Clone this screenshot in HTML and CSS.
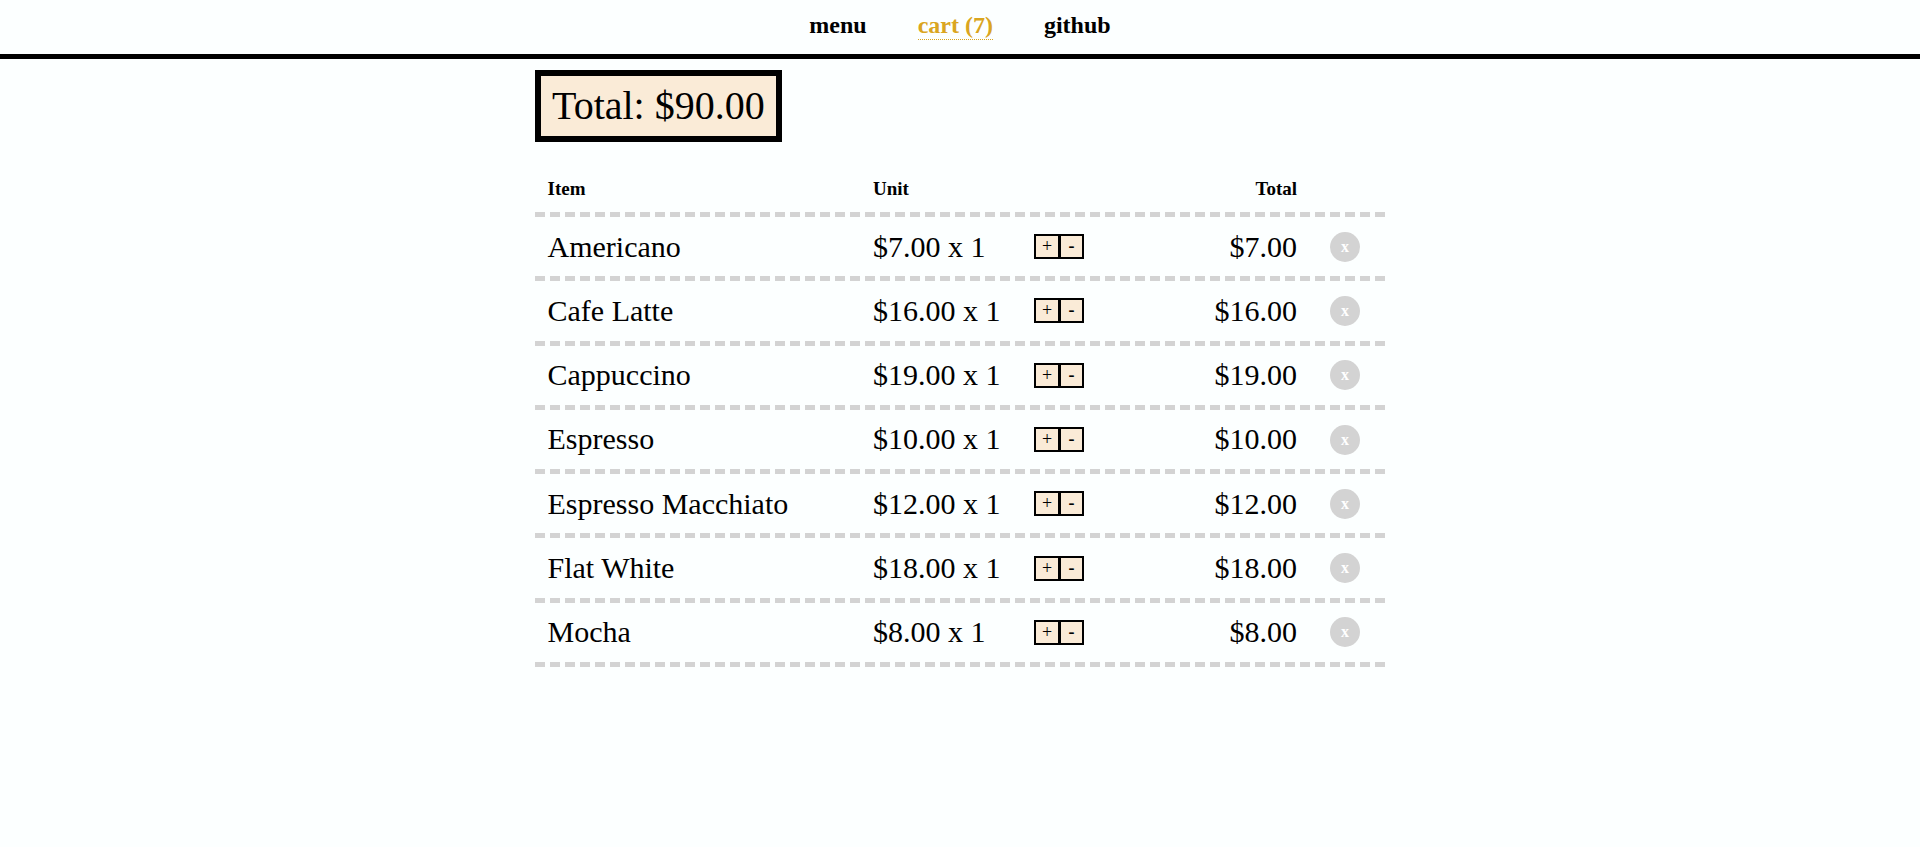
FILE: index.html
```html
<!DOCTYPE html>
<html>
<head>
<meta charset="utf-8">
<title>Cart</title>
<link rel="stylesheet" href="styles.css">
</head>
<body>
<nav class="nav">
  <a class="nav-link" href="#">menu</a>
  <a class="nav-link active" href="#">cart (7)</a>
  <a class="nav-link" href="#">github</a>
</nav>
<main class="page">
  <div class="total-box">Total: $90.00</div>
  <div class="cart">
    <div class="row head">
      <div class="cell">Item</div>
      <div class="cell">Unit</div>
      <div class="cell"></div>
      <div class="cell right">Total</div>
      <div class="cell"></div>
    </div>
    <div class="row">
      <div class="cell">Americano</div>
      <div class="cell">$7.00 x 1</div>
      <div class="cell"><span class="qty"><button class="qbtn">+</button><button class="qbtn minus">-</button></span></div>
      <div class="cell right">$7.00</div>
      <div class="cell"><button class="remove">x</button></div>
    </div>
    <div class="row">
      <div class="cell">Cafe Latte</div>
      <div class="cell">$16.00 x 1</div>
      <div class="cell"><span class="qty"><button class="qbtn">+</button><button class="qbtn minus">-</button></span></div>
      <div class="cell right">$16.00</div>
      <div class="cell"><button class="remove">x</button></div>
    </div>
    <div class="row">
      <div class="cell">Cappuccino</div>
      <div class="cell">$19.00 x 1</div>
      <div class="cell"><span class="qty"><button class="qbtn">+</button><button class="qbtn minus">-</button></span></div>
      <div class="cell right">$19.00</div>
      <div class="cell"><button class="remove">x</button></div>
    </div>
    <div class="row">
      <div class="cell">Espresso</div>
      <div class="cell">$10.00 x 1</div>
      <div class="cell"><span class="qty"><button class="qbtn">+</button><button class="qbtn minus">-</button></span></div>
      <div class="cell right">$10.00</div>
      <div class="cell"><button class="remove">x</button></div>
    </div>
    <div class="row">
      <div class="cell">Espresso Macchiato</div>
      <div class="cell">$12.00 x 1</div>
      <div class="cell"><span class="qty"><button class="qbtn">+</button><button class="qbtn minus">-</button></span></div>
      <div class="cell right">$12.00</div>
      <div class="cell"><button class="remove">x</button></div>
    </div>
    <div class="row">
      <div class="cell">Flat White</div>
      <div class="cell">$18.00 x 1</div>
      <div class="cell"><span class="qty"><button class="qbtn">+</button><button class="qbtn minus">-</button></span></div>
      <div class="cell right">$18.00</div>
      <div class="cell"><button class="remove">x</button></div>
    </div>
    <div class="row">
      <div class="cell">Mocha</div>
      <div class="cell">$8.00 x 1</div>
      <div class="cell"><span class="qty"><button class="qbtn">+</button><button class="qbtn minus">-</button></span></div>
      <div class="cell right">$8.00</div>
      <div class="cell"><button class="remove">x</button></div>
    </div>
  </div>
</main>
</body>
</html>
```
FILE: styles.css
```css
html, body {
  margin: 0;
  padding: 0;
}
body {
  background: #fcffff;
  font-family: "Liberation Serif", "Times New Roman", serif;
  color: #000;
  min-height: 847px;
}
.nav {
  display: flex;
  justify-content: center;
  gap: 51px;
  padding: 12px 0 13.5px;
  border-bottom: 5px solid #000;
}
.nav-link {
  font-size: 24px;
  font-weight: bold;
  color: #000;
  text-decoration: none;
  line-height: normal;
}
.nav-link.active {
  color: #daa520;
  border-bottom: 1px dotted #daa520;
}
.page {
  width: 850px;
  margin: 0 auto;
  padding-top: 11px;
}
.total-box {
  display: inline-block;
  font-size: 40px;
  background: #faebd7;
  border: 6px solid #000;
  padding: 6.5px 11px;
}
.cart {
  margin-top: 23.5px;
}
.row {
  display: grid;
  grid-template-columns: 325.5px 161px 75px 213px 1fr;
  align-items: center;
  border-bottom: 5px dashed #d3d3d3;
  font-size: 30px;
  line-height: 34.3px;
}
.row.head {
  font-size: 19px;
  font-weight: bold;
  line-height: normal;
}
.cell {
  padding: 12.5px;
  white-space: nowrap;
}
.cell.right {
  text-align: right;
}
.qty {
  display: flex;
}
.qbtn {
  font-family: "Liberation Serif", "Times New Roman", serif;
  font-size: 18px;
  line-height: 21px;
  height: 25px;
  width: 26px;
  padding: 0;
  margin: 0;
  background: #faebd7;
  border: 2px solid #000;
  color: #000;
  cursor: pointer;
}
.qbtn.minus {
  width: 25px;
  margin-left: -1px;
  font-weight: bold;
}
.remove {
  display: block;
  margin-left: 8px;
  width: 30px;
  height: 30px;
  border-radius: 50%;
  border: none;
  padding: 0;
  background: #d3d3d3;
  color: #fff;
  font-family: "Liberation Serif", "Times New Roman", serif;
  font-weight: bold;
  font-size: 16px;
  line-height: 30px;
  cursor: pointer;
}
```
